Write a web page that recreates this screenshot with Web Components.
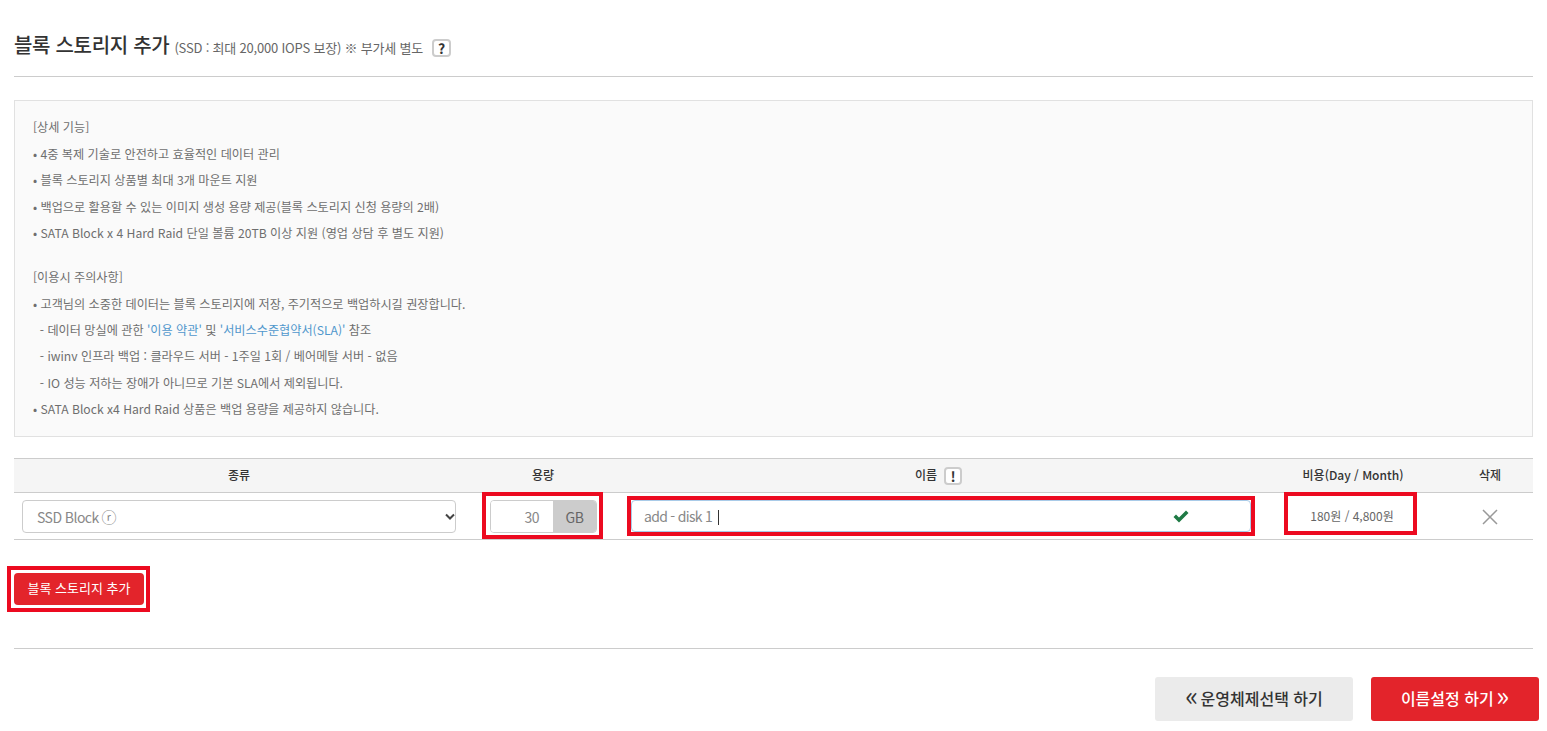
<!DOCTYPE html>
<html lang="ko"><head><meta charset="utf-8"><title>블록 스토리지 추가</title>
<style>
html,body{margin:0;padding:0;background:#fff;}
body{font-family:"Noto Sans CJK KR","Noto Sans",sans-serif;color:#666;font-size:12px;overflow:hidden;}
</style></head><body>
<storage-page></storage-page>
<script>
function def(name, css, html){
  customElements.define(name, class extends HTMLElement{
    constructor(){super();const r=this.attachShadow({mode:'open'});r.innerHTML='<style>'+css+'</style>'+html;}
  });
}
def('help-box',`:host{display:inline-flex;align-items:center;justify-content:center;box-sizing:border-box;width:19px;height:18px;border:2px solid #ccc;border-radius:4px;font-size:14px;font-weight:700;color:#333;line-height:1;background:#fff;}`,`<slot></slot>`);
def('page-title',`:host{display:flex;align-items:baseline;height:77px;box-sizing:border-box;padding-top:30px;border-bottom:1px solid #ccc;line-height:30px;white-space:nowrap;}
h2{margin:0;font-size:20px;font-weight:500;color:#333;line-height:30px;letter-spacing:-.3px;}
span{font-size:13px;color:#666;margin-left:5px;letter-spacing:-.2px;}
help-box{margin-left:9px;align-self:center;position:relative;top:-5px;}`,`<h2>블록 스토리지 추가</h2><span>(SSD : 최대 20,000 IOPS 보장) ※ 부가세 별도</span><help-box>?</help-box>`);
def('info-panel',`:host{display:block;box-sizing:border-box;height:337px;margin-top:23px;padding:13.35px 18px;background:#fafafa;border:1px solid #e1e1e1;font-size:12.15px;line-height:26.4px;color:#6e6e6e;white-space:pre;}
p{margin:0;} .gap{height:17.8px;} a{color:#5097cc;text-decoration:none;}`,`<p>[상세 기능]</p><p>• 4중 복제 기술로 안전하고 효율적인 데이터 관리</p><p>• 블록 스토리지 상품별 최대 3개 마운트 지원</p><p>• 백업으로 활용할 수 있는 이미지 생성 용량 제공(블록 스토리지 신청 용량의 2배)</p><p>• SATA Block x 4 Hard Raid 단일 볼륨 20TB 이상 지원 (영업 상담 후 별도 지원)</p><div class="gap"></div><p>[이용시 주의사항]</p><p>• 고객님의 소중한 데이터는 블록 스토리지에 저장, 주기적으로 백업하시길 권장합니다.</p><p>  - 데이터 망실에 관한 <a>'이용 약관'</a> 및 <a>'서비스수준협약서(SLA)'</a> 참조</p><p>  - iwinv 인프라 백업 : 클라우드 서버 - 1주일 1회 / 베어메탈 서버 - 없음</p><p>  - IO 성능 저하는 장애가 아니므로 기본 SLA에서 제외됩니다.</p><p>• SATA Block x4 Hard Raid 상품은 백업 용량을 제공하지 않습니다.</p>`);
def('disk-table',`:host{display:block;margin-top:21px;--cols:450px 158px 637px 188px 86px;}
.head,.row{display:grid;grid-template-columns:var(--cols);}
.head{height:33px;box-sizing:content-box;background:#f5f5f5;border-top:1px solid #ccc;border-bottom:1px solid #ccc;font-size:12px;font-weight:500;color:#333;align-items:center;justify-items:center;}
.head>div{margin-bottom:3px;}
.row{height:46px;border-bottom:1px solid #ccc;color:#666;align-items:start;justify-items:start;}
.head>.namehead{display:inline-flex;align-items:center;gap:7px;transform:translateX(-2px);margin-bottom:0;}
.namehead span{margin-bottom:3px;}
.namehead help-box{width:18px;height:18px;}
.select{box-sizing:border-box;margin:7px 0 0 8px;width:434px;height:33px;border:1px solid #ccc;border-radius:4px;display:flex;align-items:center;justify-content:space-between;padding:0 0 0 14px;font-size:14px;color:#888;background:#fff;letter-spacing:-.55px;}
.select svg{display:block;}
.mark{font-size:15px;letter-spacing:0;}
.mark-wrap{display:inline-flex;align-items:center;gap:3px;}
.red{box-sizing:border-box;border:4px solid #ec0a20;}
.qtywrap{margin:-1px 0 0 18px;padding:4px 2px 2px 4px;}
.qty{box-sizing:border-box;width:107px;height:33px;display:flex;border:1px solid #ccc;border-radius:4px;font-size:14px;overflow:hidden;letter-spacing:-.5px;}
.qty .num{flex:1;display:flex;align-items:center;justify-content:flex-end;padding-right:14px;background:#fff;color:#888;}
.qty .unit{width:43px;display:flex;align-items:center;justify-content:center;background:#ccc;color:#666;}
.namewrap{margin:3px 0 0 5px;}
.name{box-sizing:border-box;width:620px;height:32px;display:flex;align-items:center;border:1px solid #a9cbe8;border-radius:4px;padding:0 61px 0 12px;font-size:14px;color:#888;letter-spacing:-.7px;}
.caret{width:1px;height:15px;background:#333;margin-left:6px;margin-top:2px;}
.name svg{margin-left:auto;}
.costwrap{margin:-1px 0 0 25px;}
.cost{box-sizing:border-box;width:125px;height:35px;padding:3px 0 0 3px;display:flex;align-items:center;justify-content:center;font-size:12px;color:#666;}
.x{margin:16px 0 0 35px;display:block;}
`,`<div class="head"><div>종류</div><div>용량</div><div class="namehead"><span>이름</span><help-box>!</help-box></div><div>비용(Day / Month)</div><div>삭제</div></div>
<div class="row">
<div class="select"><span class="mark-wrap">SSD Block <span class="mark">ⓡ</span></span><svg width="10" height="8" viewBox="0 0 10 8"><path d="M1 1.5l4 4 4-4" fill="none" stroke="#444" stroke-width="2"/></svg></div>
<div class="red qtywrap"><div class="qty"><div class="num">30</div><div class="unit">GB</div></div></div>
<div class="red namewrap"><div class="name"><span>add - disk 1</span><span class="caret"></span><svg width="16" height="13" viewBox="0 0 16 13"><path d="M.5 7L3 4.5 6 7.5 13 .5 15.5 3 6 12.5z" fill="#1f7a45"/></svg></div></div>
<div class="red costwrap"><div class="cost">180원 / 4,800원</div></div>
<svg class="x" width="16" height="16" viewBox="0 0 16 16"><path d="M1 1l14 14M15 1L1 15" stroke="#999" stroke-width="1.5" fill="none"/></svg>
</div>`);
def('page-foot',`:host{display:block;}
.add{margin:26px 0 0 -7px;display:flex;}
.addwrap{box-sizing:border-box;border:4px solid #ec0a20;padding:3px 2px 3px 3px;display:flex;}
button{font:inherit;border:0;cursor:pointer;}
.addbtn{width:130px;height:32px;background:#e3242b;color:#fff;border-radius:4px;font-size:13px;padding:0 0 3px;}
.line{height:1px;background:#ccc;margin-top:36px;}
.nav{display:flex;justify-content:flex-end;gap:18px;margin:28px -6px 0 0;}
.nav button{height:44px;border-radius:3px;font-size:16px;font-weight:500;padding:0 0 2px;}
.prev{width:198px;background:#ebebeb;color:#333;}
.next{width:168px;background:#e3242b;color:#fff;}
.ch{font-size:27px;font-weight:400;line-height:0;vertical-align:-1px;}
.prev .ch{margin-right:-2px;}
.next .ch{margin-left:-2px;}`,`<div class="add"><div class="addwrap"><button class="addbtn">블록 스토리지 추가</button></div></div><div class="line"></div><div class="nav"><button class="prev"><span class="ch">«</span> 운영체제선택 하기</button><button class="next">이름설정 하기 <span class="ch">»</span></button></div>`);
def('storage-page',`:host{display:block;padding:0 14px;}`,`<page-title></page-title><info-panel></info-panel><disk-table></disk-table><page-foot></page-foot>`);
</script>
</body></html>
